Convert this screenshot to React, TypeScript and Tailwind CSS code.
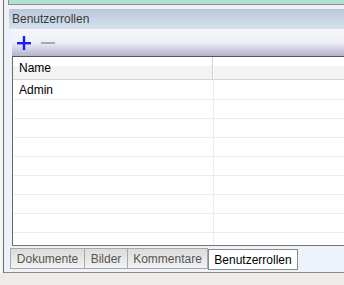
import React from "react";

const font = { fontFamily: '"Liberation Sans", Arial, sans-serif' };

export default function App() {
  const rows = Array.from({ length: 8 });
  return (
    <div className="w-[344px] h-[285px] bg-[#efebe9] overflow-hidden text-[12px]" style={font}>
      <div className="h-[273px] flex">
        <div className="w-[3px] bg-[#f6f6f6]" />
        <div className="flex-1 border-l border-[#6a6a6a] bg-[#eef1fa] flex flex-col min-w-0">
          {/* top green bar */}
          <div className="ml-[4px] h-[5px] bg-[#b3e1d1] border-l border-b border-[#8a8a8a]" />
          <div className="h-[4px]" />
          {/* header */}
          <div className="ml-[5px] h-[20px] bg-gradient-to-b from-[#bac9da] to-[#d5e1ee] flex items-center pl-[3px] text-[#3a3a3a] leading-none">
            Benutzerrollen
          </div>
          {/* toolbar */}
          <div className="ml-[8px] h-[27px] bg-gradient-to-b from-[#f6f6fc] via-[#eeeef6] to-[#b2b2ca] flex items-center gap-[10px] pl-[5px]">
            <svg width="14" height="14" viewBox="0 0 14 14">
              <rect x="0" y="6" width="14" height="2.4" fill="#1a1aff" />
              <rect x="5.8" y="0" width="2.4" height="14" fill="#1a1aff" />
            </svg>
            <svg width="14" height="14" viewBox="0 0 14 14">
              <rect x="0" y="6" width="14" height="2" fill="#a8a8b0" />
            </svg>
          </div>
          {/* grid */}
          <div className="ml-[8px] h-[190px] bg-white border-l border-t border-b border-l-[#6a6a6a] border-t-[#555] border-b-[#777] flex flex-col">
            <div className="h-[23px] shrink-0 flex border-b border-[#d6d6d6] bg-gradient-to-b from-white from-40% to-[#f3f3f3] to-40%">
              <div className="w-[200px] border-r border-[#d0d0d0] pl-[6px] flex items-center text-black">Name</div>
              <div className="flex-1 border-l border-white" />
            </div>
            {rows.map((_, i) => (
              <div key={i} className={`${i === 0 ? "h-[20px]" : "h-[19px]"} flex border-b border-[#ececec] shrink-0`}>
                <div className="w-[201px] border-r border-[#ececec] pl-[6px] flex items-center text-black">
                  {i === 0 ? "Admin" : ""}
                </div>
                <div className="flex-1" />
              </div>
            ))}
            <div className="flex-1 flex">
              <div className="w-[201px] border-r border-[#ececec]" />
            </div>
          </div>
          {/* tabs */}
          <div className="flex-1 bg-[#eef2fb] border-b border-[#8a8a8a] flex items-start pt-[2px] pl-[6px]">
            <div className="w-[75px] h-[21px] flex items-center justify-center border border-[#a8a8a8] bg-gradient-to-b from-[#dcdcdc] to-[#f2f2f2] text-[#555]">Dokumente</div>
            <div className="w-[43px] h-[21px] flex items-center justify-center border border-l-0 border-[#a8a8a8] bg-gradient-to-b from-[#dcdcdc] to-[#f2f2f2] text-[#555]">Bilder</div>
            <div className="w-[80px] h-[21px] flex items-center justify-center border border-l-0 border-[#a8a8a8] bg-gradient-to-b from-[#dcdcdc] to-[#f2f2f2] text-[#555]">Kommentare</div>
            <div className="w-[90px] h-[21px] mt-[1px] flex items-center justify-center border border-[#8a8a8a] bg-white text-black">Benutzerrollen</div>
          </div>
        </div>
      </div>
    </div>
  );
}
